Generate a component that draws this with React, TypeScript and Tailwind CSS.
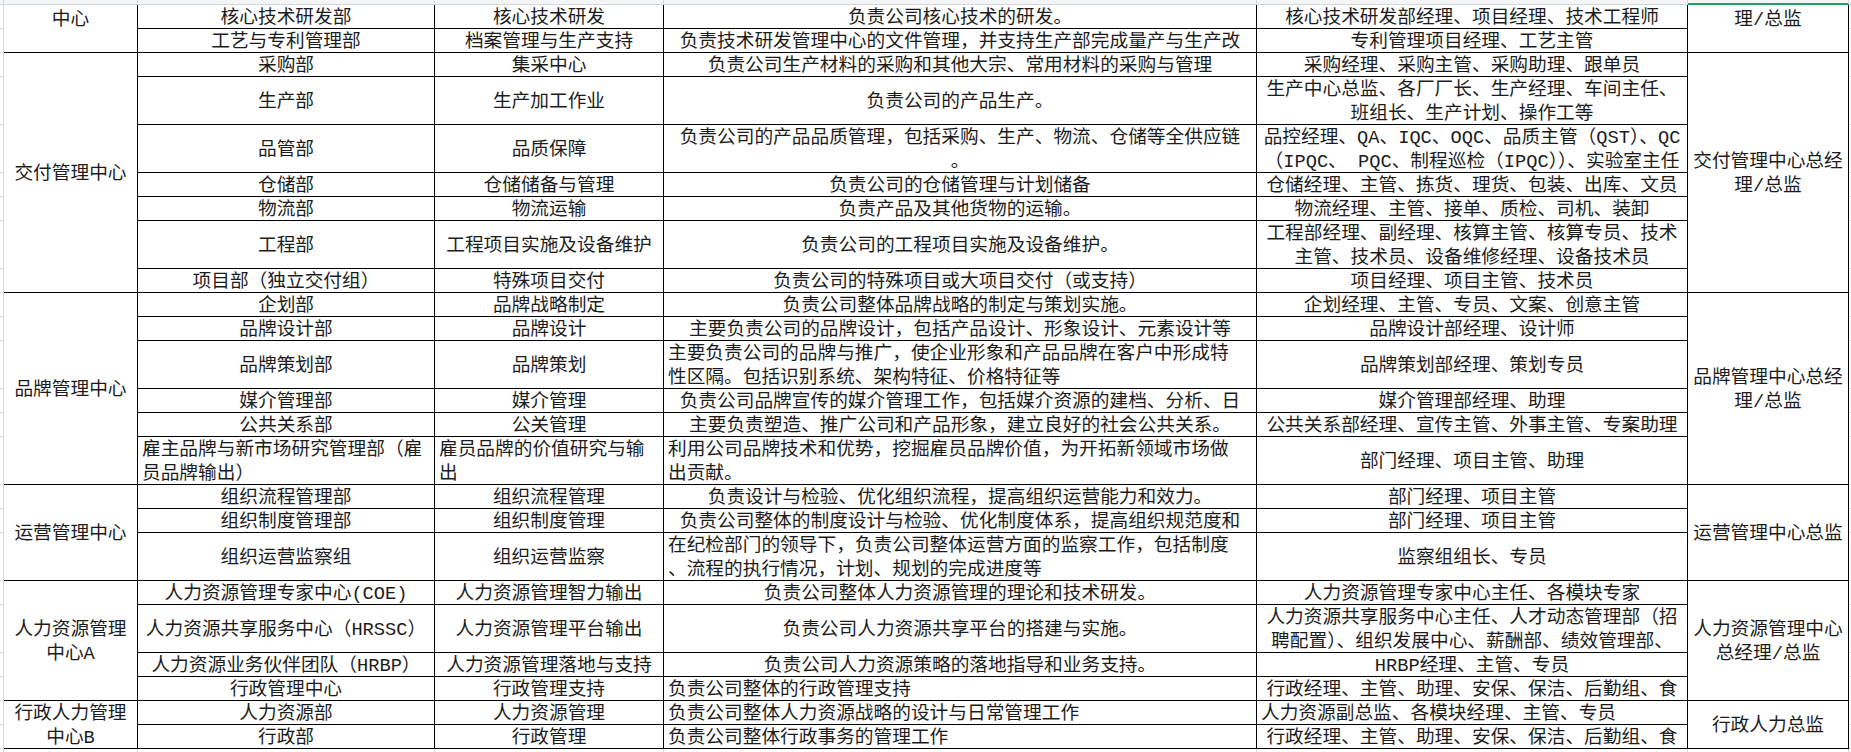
import React from "react";

type C = string | { t: string; l?: boolean };
type G = { span: number; t: string; top?: boolean };
type Row = { h: 1 | 2; g1?: G; g6?: G; c: C[] };

const SPAN: Record<number, string> = {
  1: "row-span-1",
  2: "row-span-2",
  4: "row-span-4",
  5: "row-span-5",
  8: "row-span-8",
  10: "row-span-10",
};

const rows: Row[] = [
  {
    h: 1,
    g1: { span: 2, t: "中心", top: true },
    g6: { span: 2, t: "理/总监", top: true },
    c: ["核心技术研发部", "核心技术研发", "负责公司核心技术的研发。", "核心技术研发部经理、项目经理、技术工程师"],
  },
  {
    h: 1,
    c: ["工艺与专利管理部", "档案管理与生产支持", "负责技术研发管理中心的文件管理，并支持生产部完成量产与生产改", "专利管理项目经理、工艺主管"],
  },
  {
    h: 1,
    g1: { span: 10, t: "交付管理中心" },
    g6: { span: 10, t: "交付管理中心总经\n理/总监" },
    c: ["采购部", "集采中心", "负责公司生产材料的采购和其他大宗、常用材料的采购与管理", "采购经理、采购主管、采购助理、跟单员"],
  },
  {
    h: 2,
    c: ["生产部", "生产加工作业", "负责公司的产品生产。", "生产中心总监、各厂厂长、生产经理、车间主任、\n班组长、生产计划、操作工等"],
  },
  {
    h: 2,
    c: [
      "品管部",
      "品质保障",
      "负责公司的产品品质管理，包括采购、生产、物流、仓储等全供应链\n。",
      "品控经理、QA、IQC、OQC、品质主管（QST）、QC\n（IPQC、 PQC、制程巡检（IPQC））、实验室主任",
    ],
  },
  { h: 1, c: ["仓储部", "仓储储备与管理", "负责公司的仓储管理与计划储备", "仓储经理、主管、拣货、理货、包装、出库、文员"] },
  { h: 1, c: ["物流部", "物流运输", "负责产品及其他货物的运输。", "物流经理、主管、接单、质检、司机、装卸"] },
  {
    h: 2,
    c: ["工程部", "工程项目实施及设备维护", "负责公司的工程项目实施及设备维护。", "工程部经理、副经理、核算主管、核算专员、技术\n主管、技术员、设备维修经理、设备技术员"],
  },
  { h: 1, c: ["项目部（独立交付组）", "特殊项目交付", "负责公司的特殊项目或大项目交付（或支持）", "项目经理、项目主管、技术员"] },
  {
    h: 1,
    g1: { span: 8, t: "品牌管理中心" },
    g6: { span: 8, t: "品牌管理中心总经\n理/总监" },
    c: ["企划部", "品牌战略制定", "负责公司整体品牌战略的制定与策划实施。", "企划经理、主管、专员、文案、创意主管"],
  },
  { h: 1, c: ["品牌设计部", "品牌设计", "主要负责公司的品牌设计，包括产品设计、形象设计、元素设计等", "品牌设计部经理、设计师"] },
  {
    h: 2,
    c: [
      "品牌策划部",
      "品牌策划",
      { t: "主要负责公司的品牌与推广，使企业形象和产品品牌在客户中形成特\n性区隔。包括识别系统、架构特征、价格特征等", l: true },
      "品牌策划部经理、策划专员",
    ],
  },
  { h: 1, c: ["媒介管理部", "媒介管理", "负责公司品牌宣传的媒介管理工作，包括媒介资源的建档、分析、日", "媒介管理部经理、助理"] },
  { h: 1, c: ["公共关系部", "公关管理", "主要负责塑造、推广公司和产品形象，建立良好的社会公共关系。", "公共关系部经理、宣传主管、外事主管、专案助理"] },
  {
    h: 2,
    c: [
      { t: "雇主品牌与新市场研究管理部（雇\n员品牌输出）", l: true },
      { t: "雇员品牌的价值研究与输\n出", l: true },
      { t: "利用公司品牌技术和优势，挖掘雇员品牌价值，为开拓新领域市场做\n出贡献。", l: true },
      "部门经理、项目主管、助理",
    ],
  },
  {
    h: 1,
    g1: { span: 4, t: "运营管理中心" },
    g6: { span: 4, t: "运营管理中心总监" },
    c: ["组织流程管理部", "组织流程管理", "负责设计与检验、优化组织流程，提高组织运营能力和效力。", "部门经理、项目主管"],
  },
  { h: 1, c: ["组织制度管理部", "组织制度管理", "负责公司整体的制度设计与检验、优化制度体系，提高组织规范度和", "部门经理、项目主管"] },
  {
    h: 2,
    c: [
      "组织运营监察组",
      "组织运营监察",
      { t: "在纪检部门的领导下，负责公司整体运营方面的监察工作，包括制度\n、流程的执行情况，计划、规划的完成进度等", l: true },
      "监察组组长、专员",
    ],
  },
  {
    h: 1,
    g1: { span: 5, t: "人力资源管理\n中心A" },
    g6: { span: 5, t: "人力资源管理中心\n总经理/总监" },
    c: ["人力资源管理专家中心(COE)", "人力资源管理智力输出", "负责公司整体人力资源管理的理论和技术研发。", "人力资源管理专家中心主任、各模块专家"],
  },
  {
    h: 2,
    c: [
      "人力资源共享服务中心（HRSSC）",
      "人力资源管理平台输出",
      "负责公司人力资源共享平台的搭建与实施。",
      "人力资源共享服务中心主任、人才动态管理部（招\n聘配置）、组织发展中心、薪酬部、绩效管理部、",
    ],
  },
  { h: 1, c: ["人力资源业务伙伴团队（HRBP）", "人力资源管理落地与支持", "负责公司人力资源策略的落地指导和业务支持。", "HRBP经理、主管、专员"] },
  { h: 1, c: ["行政管理中心", "行政管理支持", { t: "负责公司整体的行政管理支持", l: true }, "行政经理、主管、助理、安保、保洁、后勤组、食"] },
  {
    h: 1,
    g1: { span: 2, t: "行政人力管理\n中心B" },
    g6: { span: 2, t: "行政人力总监" },
    c: ["人力资源部", "人力资源管理", { t: "负责公司整体人力资源战略的设计与日常管理工作", l: true }, { t: "人力资源副总监、各模块经理、主管、专员", l: true }],
  },
  { h: 1, c: ["行政部", "行政管理", { t: "负责公司整体行政事务的管理工作", l: true }, "行政经理、主管、助理、安保、保洁、后勤组、食"] },
];

const COLS = [134, 297, 229, 593, 431, 161];
const UNITS = rows.flatMap((r) => (r.h === 2 ? [48] : [24]));

function Cell({ c, span, top }: { c: C; span: number; top?: boolean }) {
  const t = typeof c === "string" ? c : c.t;
  const left = typeof c !== "string" && c.l;
  return (
    <div
      className={[
        "flex flex-col overflow-hidden border-b border-r border-black pt-[3px]",
        SPAN[span],
        top ? "justify-start" : "justify-center",
        left ? "items-start pl-[4px]" : "items-center text-center",
      ].join(" ")}
    >
      {t.split("\n").map((line, i) => (
        <div key={i} className="whitespace-nowrap">
          {line}
        </div>
      ))}
    </div>
  );
}

export default function App() {
  return (
    <div className="h-[752px] w-[1851px] overflow-hidden bg-white font-['Liberation_Mono','Noto_Sans_CJK_SC',monospace] text-[18.7px] leading-[24px] text-[#1c1c1c]">
      {/* column header remnant */}
      <div className="flex h-[5px]">
        <div className="w-[4px] border-b border-r border-[#d3d7de] bg-[#f4f5f7]" />
        {COLS.map((w, i) => (
          <div
            key={i}
            style={{ width: w }}
            className={
              i === 5
                ? "border-b-2 border-r border-b-[#21a366] border-r-[#d3d7de] bg-[#f4f5f7]"
                : "border-b border-r border-[#d3d7de] bg-[#f4f5f7]"
            }
          />
        ))}
        <div className="flex-1 border-b border-[#d3d7de] bg-[#f4f5f7]" />
      </div>

      <div className="flex">
        <div className="flex w-[4px] flex-col border-r border-[#d3d7de]">
          {UNITS.map((h, i) => (
            <div key={i} style={{ height: h }} className="border-b border-[#d3d7de]" />
          ))}
        </div>

        <div className="grid grid-cols-[134px_297px_229px_593px_431px_161px] auto-rows-[24px]">
          {rows.flatMap((r, ri) => {
            const out: React.ReactNode[] = [];
            if (r.g1) out.push(<Cell key={`g1-${ri}`} c={r.g1.t} span={r.g1.span} top={r.g1.top} />);
            r.c.forEach((c, ci) => out.push(<Cell key={`c-${ri}-${ci}`} c={c} span={r.h} />));
            if (r.g6) out.push(<Cell key={`g6-${ri}`} c={r.g6.t} span={r.g6.span} top={r.g6.top} />);
            return out;
          })}
        </div>

        <div className="flex flex-1 flex-col">
          {UNITS.map((h, i) => (
            <div key={i} style={{ height: h }} className="border-b border-[#d3d7de]" />
          ))}
        </div>
      </div>

      <div className="flex h-[3px]">
        <div className="w-[4px] border-r border-[#d3d7de]" />
        {COLS.map((w, i) => (
          <div key={i} style={{ width: w }} className="border-r border-[#d3d7de]" />
        ))}
      </div>
    </div>
  );
}
